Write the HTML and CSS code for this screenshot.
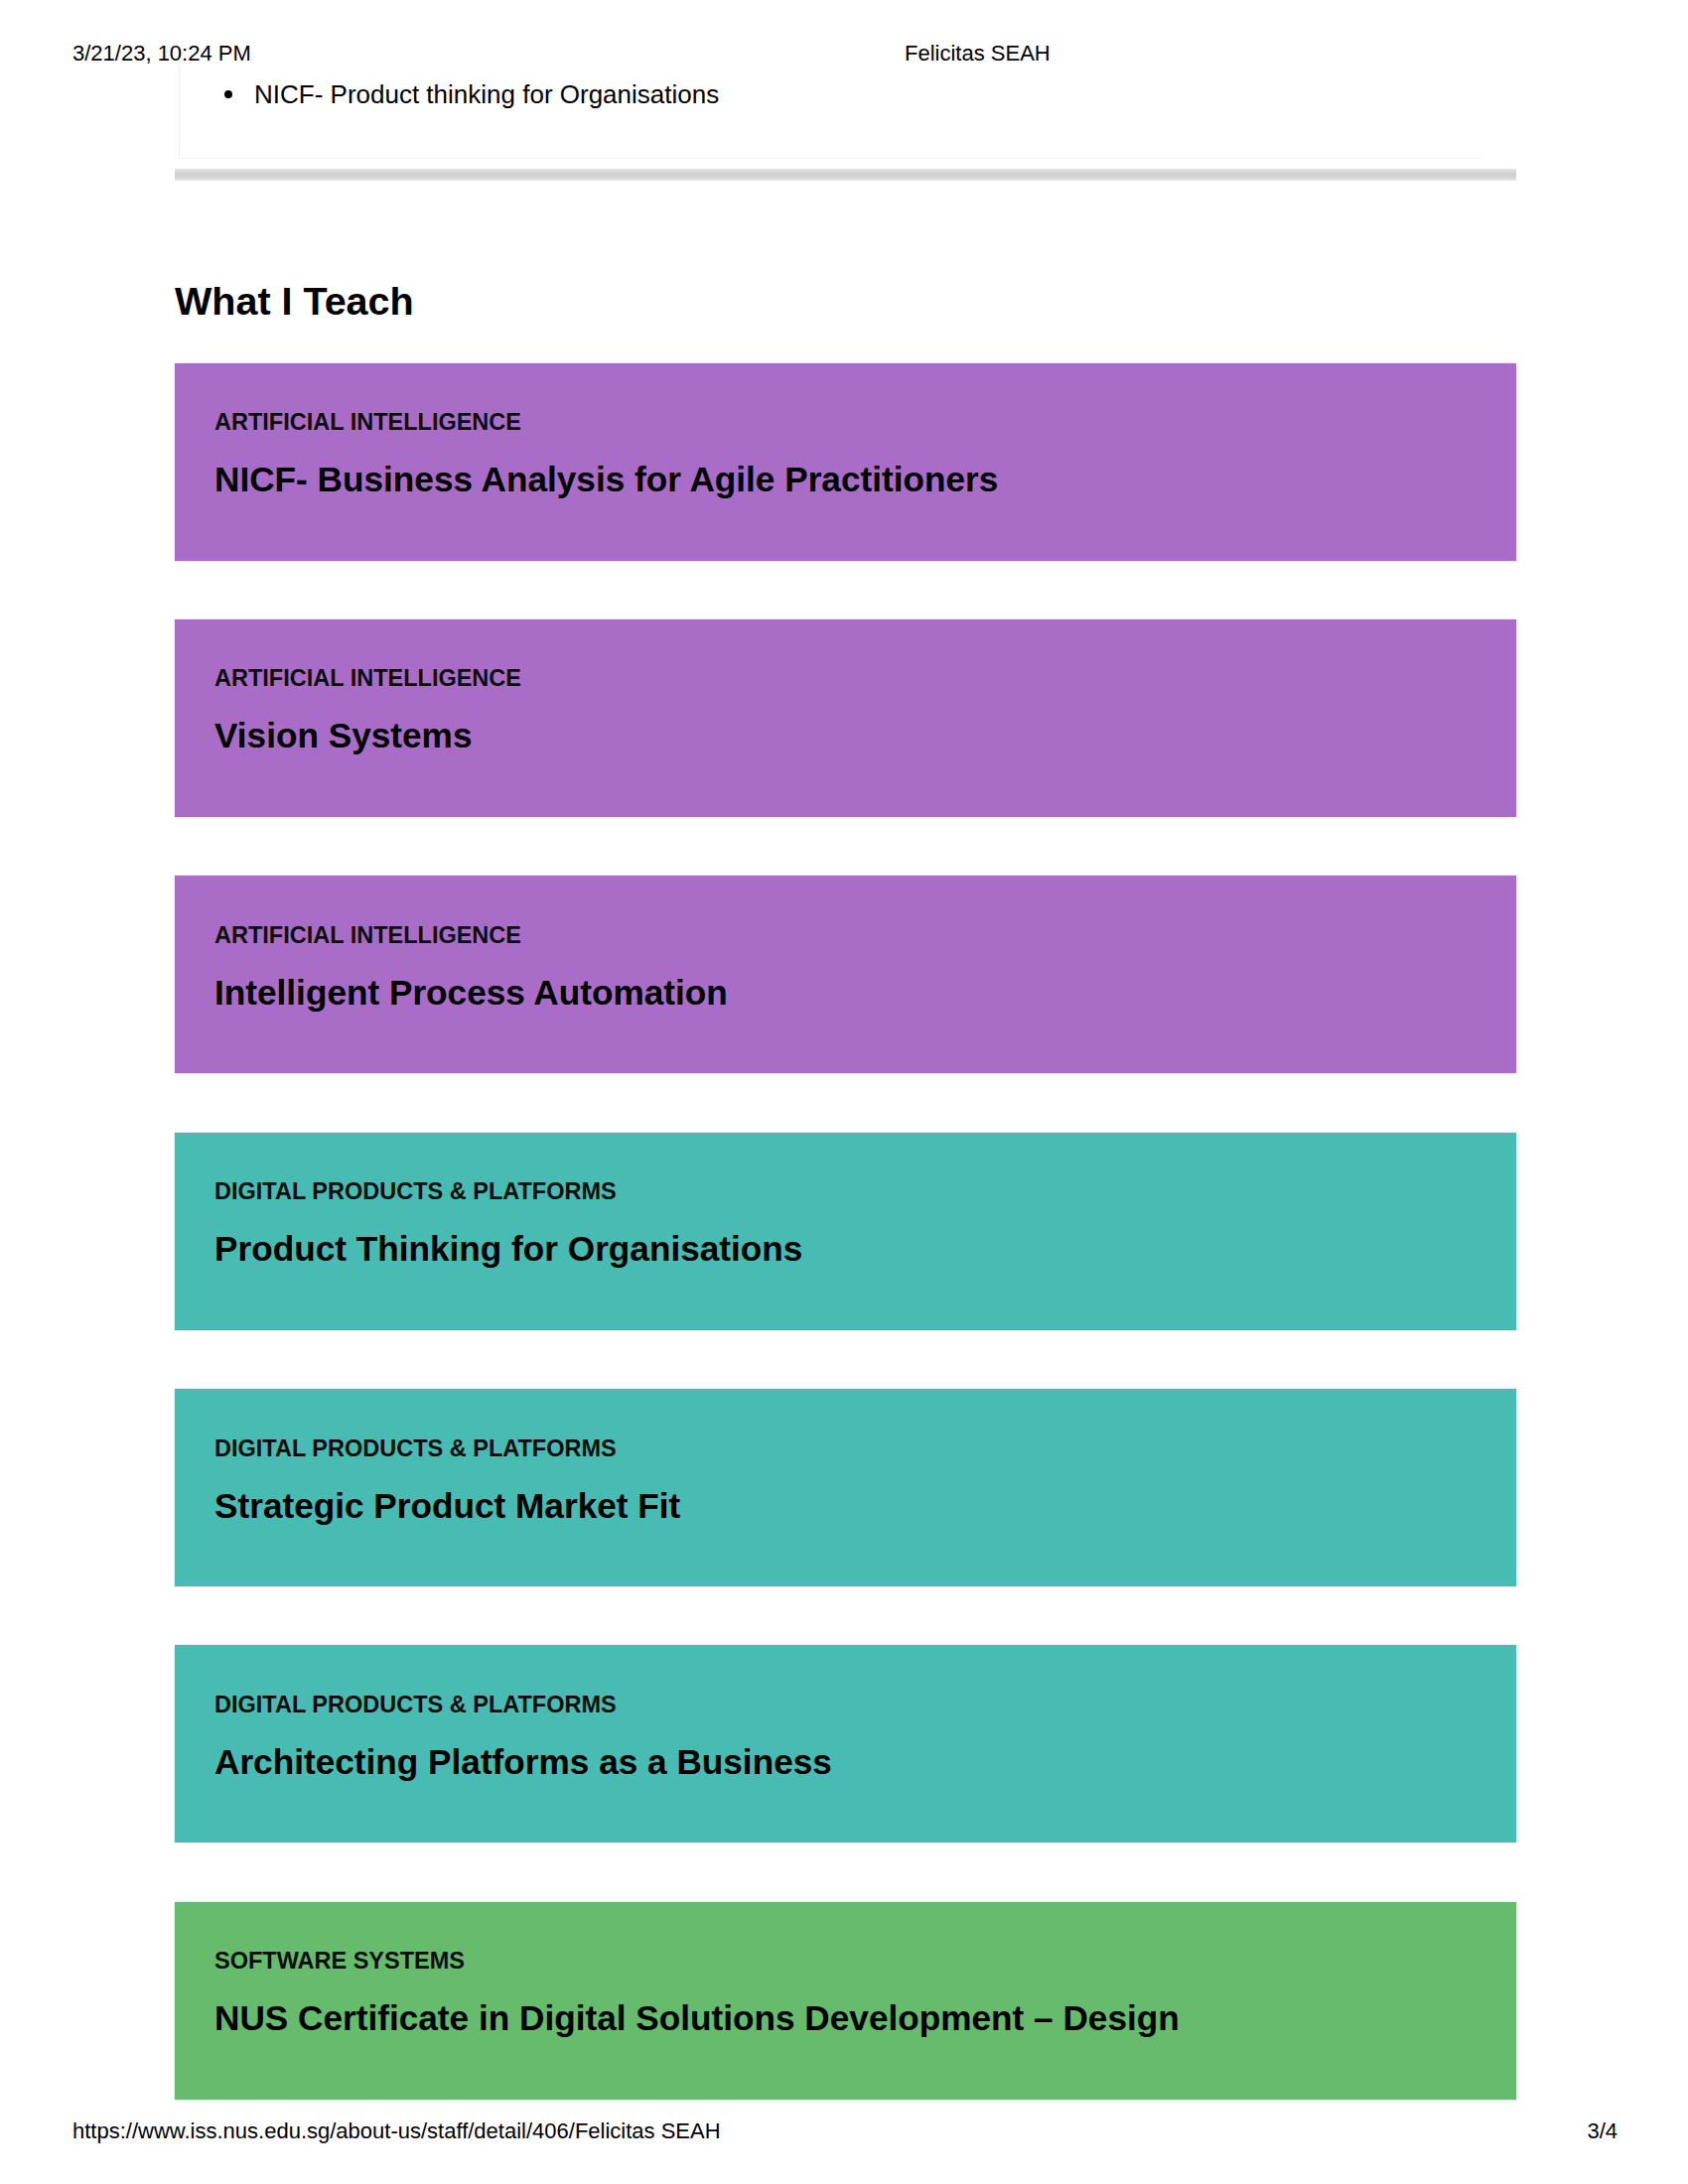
FILE: index.html
```html
<!DOCTYPE html>
<html lang="en">
<head>
<meta charset="utf-8">
<title>Felicitas SEAH</title>
<link rel="stylesheet" href="styles.css">
</head>
<body>
<header class="print-head">
  <span class="ph-date">3/21/23, 10:24 PM</span>
  <span class="ph-title">Felicitas SEAH</span>
</header>

<section class="prev-card">
  <div class="prev-body">
    <ul class="prev-list">
      <li>NICF- Product thinking for Organisations</li>
    </ul>
  </div>
  <div class="prev-bar"></div>
</section>

<h2 class="section-title">What I Teach</h2>

<div class="courses">
  <a class="course purple">
    <div class="course-cat">ARTIFICIAL INTELLIGENCE</div>
    <div class="course-name">NICF- Business Analysis for Agile Practitioners</div>
  </a>
  <a class="course purple">
    <div class="course-cat">ARTIFICIAL INTELLIGENCE</div>
    <div class="course-name">Vision Systems</div>
  </a>
  <a class="course purple">
    <div class="course-cat">ARTIFICIAL INTELLIGENCE</div>
    <div class="course-name">Intelligent Process Automation</div>
  </a>
  <a class="course teal">
    <div class="course-cat">DIGITAL PRODUCTS &amp; PLATFORMS</div>
    <div class="course-name">Product Thinking for Organisations</div>
  </a>
  <a class="course teal">
    <div class="course-cat">DIGITAL PRODUCTS &amp; PLATFORMS</div>
    <div class="course-name">Strategic Product Market Fit</div>
  </a>
  <a class="course teal">
    <div class="course-cat">DIGITAL PRODUCTS &amp; PLATFORMS</div>
    <div class="course-name">Architecting Platforms as a Business</div>
  </a>
  <a class="course green">
    <div class="course-cat">SOFTWARE SYSTEMS</div>
    <div class="course-name">NUS Certificate in Digital Solutions Development – Design</div>
  </a>
</div>

<footer class="print-foot">
  <span>https://www.iss.nus.edu.sg/about-us/staff/detail/406/Felicitas SEAH</span>
  <span>3/4</span>
</footer>
</body>
</html>
```

FILE: styles.css
```css
html, body {
  margin: 0;
  padding: 0;
  background: #ffffff;
}

body {
  font-family: "Liberation Sans", Arial, sans-serif;
  color: #000;
  width: 1700px;
  min-height: 2200px;
}

.print-head {
  display: grid;
  grid-template-columns: 838px auto;
  padding: 41px 0 0 73px;
  font-size: 22px;
  line-height: 25px;
  height: 25px;
}

.prev-card {
  margin: 0 0 0 176px;
  width: 1351px;
}

.prev-body {
  height: 94px;
  margin: 0 34px 0 4px;
  border-left: 1px solid #eeeeee;
  border-bottom: 1px solid #f3f3f3;
  box-sizing: border-box;
}

.prev-list {
  margin: 0;
  padding: 14px 0 0 45px;
  list-style: none;
  font-size: 26px;
  line-height: 30px;
}

.prev-list li {
  display: flex;
  align-items: center;
  gap: 22px;
}

.prev-list li::before {
  content: "";
  width: 8px;
  height: 8px;
  border-radius: 50%;
  background: #000;
  flex: none;
}

.prev-bar {
  margin-top: 10px;
  height: 12px;
  background: linear-gradient(to bottom, #e4e4e4 0%, #cfcfcf 45%, #d6d6d6 75%, #e8e8e8 100%);
}

.section-title {
  margin: 99px 0 0 176px;
  font-size: 39.5px;
  line-height: 45px;
  font-weight: bold;
}

.courses {
  margin: 39.5px 0 0 176px;
  width: 1351px;
  display: flex;
  flex-direction: column;
  gap: 59.4px;
}

.course {
  display: block;
  height: 199px;
  box-sizing: border-box;
  padding: 46.5px 40px 0 40px;
  box-shadow: 0 0 2px rgba(0, 0, 0, 0.22);
  color: #000;
  text-decoration: none;
}

.purple { background: #a96dc8; }
.teal { background: #48bbb2; }
.green { background: #66bb6d; }

.course-cat {
  font-size: 23.5px;
  line-height: 27px;
  font-weight: bold;
  color: #0d0d0d;
}

.course-name {
  margin-top: 24px;
  font-size: 35.2px;
  line-height: 40px;
  font-weight: bold;
}

.print-foot {
  display: flex;
  justify-content: space-between;
  margin-top: 19px;
  padding: 0 71px 0 73px;
  font-size: 22px;
  line-height: 25px;
}
```
